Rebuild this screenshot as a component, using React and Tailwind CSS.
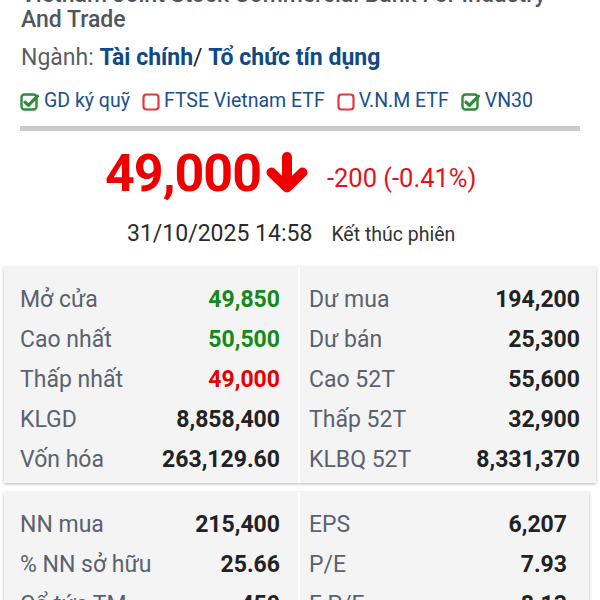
import React from 'react'

// ── Icons ─────────────────────────────────────────────────────────────────────
function CheckedBox() {
  return (
    <svg width="20" height="19" viewBox="0 0 20 19" className="shrink-0">
      <rect x="1.5" y="2.5" width="15" height="15" rx="3" fill="none" stroke="#2e8b3a" strokeWidth="2.4" />
      <path d="M5 10.2 L8.4 13.4 L17.5 4.2" fill="none" stroke="#2e8b3a" strokeWidth="3.2" strokeLinecap="round" strokeLinejoin="round" />
    </svg>
  )
}

function EmptyBox() {
  return (
    <svg width="18" height="19" viewBox="0 0 18 19" className="shrink-0">
      <rect x="1.5" y="2.5" width="15" height="15" rx="3" fill="none" stroke="#e0383e" strokeWidth="2.2" />
    </svg>
  )
}

function ArrowDown() {
  return (
    <svg width="42" height="41" viewBox="0 0 42 41" className="shrink-0">
      <path d="M21 5 L21 31" stroke="#ee0000" strokeWidth="10" strokeLinecap="round" />
      <path d="M5.5 20.5 L21 35.5 L36.5 20.5" fill="none" stroke="#ee0000" strokeWidth="10" strokeLinecap="round" strokeLinejoin="round" />
    </svg>
  )
}

// ── Data ──────────────────────────────────────────────────────────────────────
const tags = [
  { on: true, text: 'GD ký quỹ' },
  { on: false, text: 'FTSE Vietnam ETF' },
  { on: false, text: 'V.N.M ETF' },
  { on: true, text: 'VN30' },
]

const green = 'text-[#14891c]'
const red = 'text-[#e60000]'

const card1 = [
  [['Mở cửa', '49,850', green], ['Dư mua', '194,200']],
  [['Cao nhất', '50,500', green], ['Dư bán', '25,300']],
  [['Thấp nhất', '49,000', red], ['Cao 52T', '55,600']],
  [['KLGD', '8,858,400'], ['Thấp 52T', '32,900']],
  [['Vốn hóa', '263,129.60'], ['KLBQ 52T', '8,331,370']],
]

const card2 = [
  [['NN mua', '215,400'], ['EPS', '6,207']],
  [['% NN sở hữu', '25.66'], ['P/E', '7.93']],
  [['Cổ tức TM', '450'], ['F P/E', '8.13']],
]

function Row({ label, value, color }) {
  return (
    <div className="h-[40px] flex items-center justify-between">
      <span className="text-[#5a626e]">{label}</span>
      <span className={`font-bold ${color ?? 'text-[#222222]'}`}>{value}</span>
    </div>
  )
}

function StatCard({ rows, className, rightPad }) {
  return (
    <div className={`bg-white shadow-[0_1px_3px_rgba(0,0,0,0.28)] grid grid-cols-[294px_1fr] gap-[2px] text-[23px] ${className}`}>
      <div className="bg-[#f4f4f4] pl-[16px] pr-[18px] pt-[13px] pb-[3px]">
        {rows.map(([l], i) => <Row key={i} label={l[0]} value={l[1]} color={l[2]} />)}
      </div>
      <div className={`bg-[#f4f4f4] pl-[9px] ${rightPad} pt-[13px] pb-[3px]`}>
        {rows.map(([, r], i) => <Row key={i} label={r[0]} value={r[1]} color={r[2]} />)}
      </div>
    </div>
  )
}

export default function App() {
  return (
    <div className="w-[600px] h-[600px] overflow-hidden bg-white font-['Roboto','Liberation_Sans',sans-serif]">
      {/* Tên công ty */}
      <div className="px-[21px] -mt-[18px] text-[23px] leading-[25px] font-medium text-[#51565d]">
        <p className="whitespace-nowrap">Vietnam Joint Stock Commercial Bank For Industry</p>
        <p>And Trade</p>
      </div>

      {/* Ngành */}
      <p className="px-[21px] mt-[11px] text-[23px] leading-[30px] text-[#5a5f66]">
        Ngành: <span className="font-bold text-[#0f4a86]">Tài chính</span>
        <span className="text-[#222]">/ </span>
        <span className="font-bold text-[#0f4a86]">Tổ chức tín dụng</span>
      </p>

      {/* Nhóm chỉ số */}
      <div className="px-[20px] mt-[15px] flex items-center gap-[12px] text-[19.5px] leading-[26px] text-[#1c4f8c]">
        {tags.map((t, i) => (
          <span key={i} className="flex items-center gap-[4px]">
            {t.on ? <CheckedBox /> : <EmptyBox />}
            {t.text}
          </span>
        ))}
      </div>

      <div className="mx-[20px] mt-[12px] h-[5px] bg-[#cacaca]" />

      {/* Giá */}
      <div className="mt-[15px] pl-[105px] flex items-start">
        <span className="text-[52px] leading-[56px] font-bold text-[#ee0000] tracking-[-1px]">49,000</span>
        <span className="mt-[6px] ml-[5px]"><ArrowDown /></span>
        <span className="mt-[18px] ml-[19px] text-[25.5px] leading-[28px] text-[#e3121b]">-200 (-0.41%)</span>
      </div>

      <div className="mt-[17px] pl-[127px] flex items-baseline gap-[19px] leading-[30px] text-[#2b2b2b]">
        <span className="text-[23px]">31/10/2025 14:58</span>
        <span className="text-[19.5px] text-[#333]">Kết thúc phiên</span>
      </div>

      {/* Bảng giá */}
      <StatCard rows={card1} className="mt-[17px] ml-[4px] w-[592px]" rightPad="pr-[16px]" />
      <StatCard rows={card2} className="mt-[9px] ml-[4px] w-[585px]" rightPad="pr-[22px]" />
    </div>
  )
}
